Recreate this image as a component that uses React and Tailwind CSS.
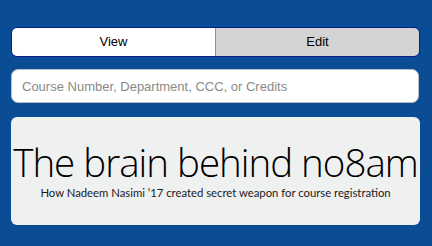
import React, { useState } from 'react';

const App = () => {
  const [mode, setMode] = useState('view');

  return (
    <div className="w-[432px] h-[246px] bg-[#0b4d95] px-[11px] pt-[27px] overflow-hidden" style={{ fontFamily: '"Liberation Sans", Arial, sans-serif' }}>
      {/* View / Edit toggle */}
      <div className="flex h-[30px] w-[409px] rounded-[6px] border border-[#0c1f86] overflow-hidden">
        <button
          onClick={() => setMode('view')}
          className={`flex-1 flex items-center justify-center text-[13px] text-black border-r border-[#8a8f99] ${
            mode === 'view' ? 'bg-white' : 'bg-[#d3d3d3]'
          }`}
        >
          View
        </button>
        <button
          onClick={() => setMode('edit')}
          className={`flex-1 flex items-center justify-center text-[13px] text-black ${
            mode === 'edit' ? 'bg-white' : 'bg-[#d3d3d3]'
          }`}
        >
          Edit
        </button>
      </div>

      {/* Search */}
      <input
        type="text"
        placeholder="Course Number, Department, CCC, or Credits"
        className="mt-[12px] block w-[408px] h-[34px] rounded-[7px] border border-[#b8bcc4] bg-white px-[10px] text-[13px] text-gray-800 placeholder-[#8a8a8a] outline-none"
      />

      {/* Featured article */}
      <div className="mt-[14px] w-[409px] h-[108px] rounded-[6px] bg-[#eff0f0] flex flex-col items-center pt-[25px]">
        <h1
          className="text-[38.5px] leading-[40px] font-light text-black whitespace-nowrap tracking-[-1px]"
          style={{ fontFamily: '"Open Sans", Lato, sans-serif' }}
        >
          The brain behind no8am
        </h1>
        <p
          className="mt-[4px] text-[11.3px] leading-[13px] text-[#1a1a1a] whitespace-nowrap"
          style={{ fontFamily: 'Lato, "Open Sans", sans-serif' }}
        >
          How Nadeem Nasimi ’17 created secret weapon for course registration
        </p>
      </div>
    </div>
  );
};

export default App;
